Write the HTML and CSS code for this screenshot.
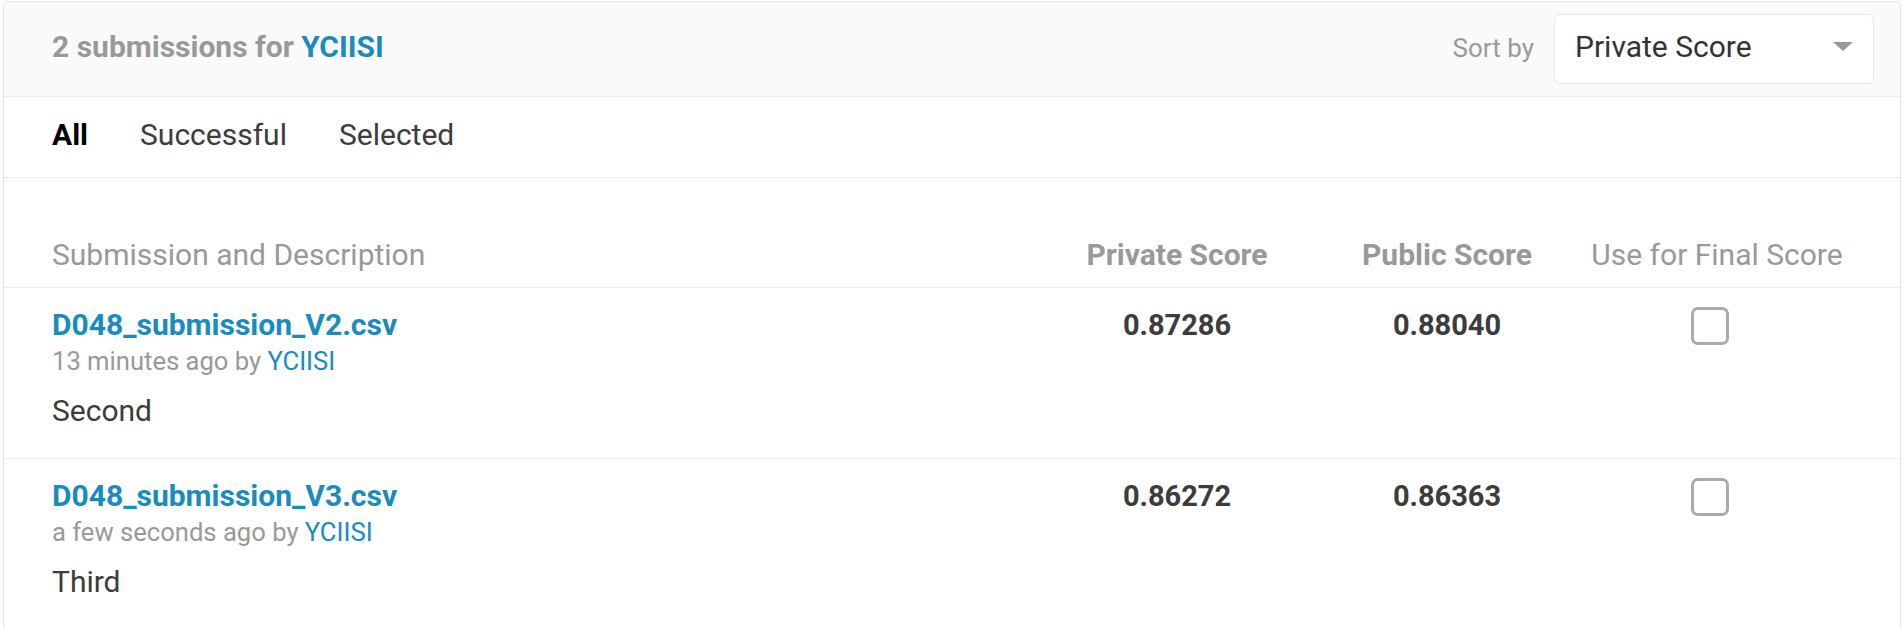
FILE: index.html
```html
<!DOCTYPE html>
<html lang="en">
<head>
<meta charset="utf-8">
<title>Submissions</title>
<link rel="stylesheet" href="styles.css">
</head>
<body>
<div class="card">
  <div class="header">
    <div class="title">2 submissions for <a class="link" href="#">YCIISI</a></div>
    <div class="sort">
      <span class="sort-label">Sort by</span>
      <div class="select">
        <span class="select-value">Private Score</span>
        <svg class="caret" width="20" height="9" viewBox="0 0 20 9"><path d="M0 0 H20 L10 9 Z" fill="#999"/></svg>
      </div>
    </div>
  </div>
  <div class="tabs">
    <span class="tab active">All</span>
    <span class="tab">Successful</span>
    <span class="tab">Selected</span>
  </div>
  <div class="grid cols">
    <div class="col-name">Submission and Description</div>
    <div class="col-score">Private Score</div>
    <div class="col-score">Public Score</div>
    <div class="col-final">Use for Final Score</div>
  </div>
  <div class="grid row">
    <div class="sub">
      <a class="sub-name" href="#">D048_submission_V2.csv</a>
      <div class="sub-meta">13 minutes ago by <a class="link" href="#">YCIISI</a></div>
      <div class="sub-desc">Second</div>
    </div>
    <div class="score">0.87286</div>
    <div class="score">0.88040</div>
    <div class="final"><span class="check"></span></div>
  </div>
  <div class="grid row">
    <div class="sub">
      <a class="sub-name" href="#">D048_submission_V3.csv</a>
      <div class="sub-meta">a few seconds ago by <a class="link" href="#">YCIISI</a></div>
      <div class="sub-desc">Third</div>
    </div>
    <div class="score">0.86272</div>
    <div class="score">0.86363</div>
    <div class="final"><span class="check"></span></div>
  </div>
</div>
</body>
</html>
```

FILE: styles.css
```css
html, body {
  margin: 0;
  padding: 0;
  background: #ffffff;
}
body {
  font-family: Roboto, "Liberation Sans", sans-serif;
  color: #3c3c3c;
  overflow: hidden;
}
a {
  text-decoration: none;
}
.link {
  color: #1a8bbd;
}
.card {
  margin: 1px 1px 0 3px;
  border: 1px solid #e3e3e3;
  border-bottom-color: #ececec;
  border-radius: 5px 5px 0 0;
}
.header {
  display: flex;
  align-items: baseline;
  justify-content: space-between;
  padding: 12px 26px 12px 48px;
  background: #fafafa;
  border-bottom: 1px solid #ebebeb;
  border-radius: 5px 5px 0 0;
}
.title {
  font-size: 30px;
  line-height: 36px;
  font-weight: 700;
  color: #999999;
}
.sort {
  display: flex;
  align-items: baseline;
  gap: 20px;
}
.sort-label {
  font-size: 26px;
  color: #999999;
}
.select {
  box-sizing: border-box;
  width: 320px;
  height: 70px;
  display: flex;
  align-items: baseline;
  justify-content: space-between;
  padding: 14px 20px 0 20px;
  background: #ffffff;
  border: 1px solid #e6e6e6;
  border-radius: 6px;
}
.select-value {
  font-size: 30px;
  line-height: 36px;
  color: #333333;
}
.caret {
  align-self: flex-start;
  margin-top: 13px;
}
.tabs {
  display: flex;
  gap: 52px;
  padding: 20px 48px 24px 48px;
  border-bottom: 1px solid #e6e6e6;
}
.tab {
  font-size: 30px;
  line-height: 36px;
  color: #3c3c3c;
}
.tab.active {
  font-weight: 700;
  color: #000000;
}
.grid {
  display: grid;
  grid-template-columns: 1fr 270px 270px 270px;
  padding: 0 48px;
}
.cols {
  padding-top: 59px;
  padding-bottom: 14px;
  border-bottom: 1px solid #ececec;
  font-size: 30px;
  line-height: 36px;
  color: #999999;
}
.col-score {
  text-align: center;
  font-weight: 700;
}
.col-final {
  text-align: center;
}
.row {
  padding-top: 19px;
  padding-bottom: 29px;
  border-bottom: 1px solid #ececec;
}
.row:last-child {
  border-bottom: none;
}
.sub {
  display: flex;
  flex-direction: column;
  align-items: flex-start;
}
.sub-name {
  font-size: 30px;
  line-height: 36px;
  font-weight: 700;
  color: #1a8bbd;
}
.sub-meta {
  font-size: 25.6px;
  line-height: 37px;
  color: #999999;
}
.sub-desc {
  margin-top: 13px;
  font-size: 30px;
  line-height: 36px;
  color: #3c3c3c;
}
.score {
  text-align: center;
  font-size: 29px;
  line-height: 36px;
  font-weight: 700;
  color: #3c3c3c;
}
.final {
  display: flex;
  justify-content: center;
}
.check {
  box-sizing: border-box;
  width: 38px;
  height: 38px;
  margin-right: 14px;
  border: 3.5px solid #aaaaaa;
  border-radius: 7px;
  background: #ffffff;
}
```
